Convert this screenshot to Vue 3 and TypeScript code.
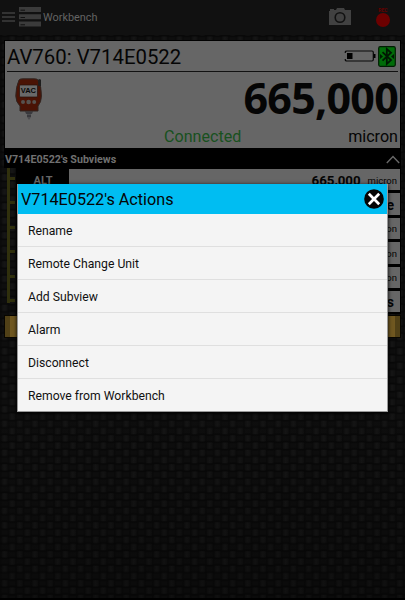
<script setup lang="ts">
interface Subview {
  label: string
  value: string
  unit: string
}

const device = { name: 'AV760: V714E0522', serial: 'V714E0522', reading: '665,000', unit: 'micron', status: 'Connected' }

const subviews: Subview[] = [
  { label: 'ALT', value: '665,000', unit: 'micron' },
  { label: '', value: 'e', unit: '' },
  { label: '', value: '', unit: 'micron' },
  { label: '', value: '', unit: 'micron' },
  { label: '', value: '', unit: 'micron' },
  { label: '', value: 's', unit: '' },
]

const actions: string[] = ['Rename', 'Remote Change Unit', 'Add Subview', 'Alarm', 'Disconnect', 'Remove from Workbench']
</script>

<template>
  <div class="screen">
    <svg class="weave" width="405" height="600" aria-hidden="true">
      <defs>
        <linearGradient id="strand" x1="0" y1="0" x2="1" y2="0">
          <stop offset="0" stop-color="#0f0f0f" />
          <stop offset="0.5" stop-color="#161616" />
          <stop offset="1" stop-color="#0f0f0f" />
        </linearGradient>
        <pattern id="cloth" x="8.5" y="7" width="15.2" height="14.5" patternUnits="userSpaceOnUse">
          <rect width="15.2" height="14.5" fill="#090909" />
          <rect x="0.5" y="0.5" width="6.4" height="6.2" rx="1" fill="url(#strand)" />
          <rect x="8.1" y="7.7" width="6.4" height="6.2" rx="1" fill="url(#strand)" />
          <rect x="8" y="1.3" width="6.6" height="4.6" fill="#0e0e0e" />
          <rect x="0.4" y="8.5" width="6.6" height="4.6" fill="#0e0e0e" />
        </pattern>
        <linearGradient id="fade" x1="0" y1="0" x2="0" y2="1">
          <stop offset="0.65" stop-color="#000" stop-opacity="0" />
          <stop offset="1" stop-color="#000" stop-opacity="0.25" />
        </linearGradient>
      </defs>
      <rect width="405" height="600" fill="url(#cloth)" />
      <rect width="405" height="600" fill="url(#fade)" />
      <rect y="598" width="405" height="2" fill="#000" />
    </svg>

    <header class="bar">
      <svg class="menu" width="13" height="10" viewBox="0 0 13 10">
        <path d="M0 1h13M0 5h13M0 9h13" stroke="#555" stroke-width="1.2" />
      </svg>
      <svg class="rack" width="22" height="20" viewBox="0 0 22 20">
        <path d="M0 0h22v5H0zM0 7.3h22v5H0zM0 14.6h22v5H0z" fill="#3b3b3b" />
        <path d="M1.5 3.2h4.5M1.5 10.5h4.5M1.5 17.8h4.5" stroke="#111" />
      </svg>
      <span class="bar-title">Workbench</span>
      <svg class="camera" width="22" height="18" viewBox="0 0 22 18">
        <path d="M0 3h1V1h4v1h2l1-2h7l1 2h6v15H0z" fill="#414141" />
        <circle cx="11" cy="9.5" r="4.8" fill="none" stroke="#111" stroke-width="1.6" />
      </svg>
      <div class="rec">
        <span>REC</span>
        <i></i>
      </div>
    </header>

    <main class="bench">
      <section class="card">
        <div class="card-head">
          <h1>{{ device.name }}</h1>
          <svg width="32" height="12" viewBox="0 0 32 12">
            <path d="M1.3 3V2Q1.3 1 3 1H28Q29.3 1 29.3 2.5V9.5Q29.3 11 28 11H3Q1.3 11 1.3 10V9" fill="none" stroke="#080808" stroke-width="1.2" />
            <path d="M3 3h5.5v6H3zM29.5 4h2v4h-2z" fill="#000" />
          </svg>
          <svg width="18" height="21" viewBox="0 0 18 21">
            <rect x="0.7" y="0.7" width="16.6" height="19.6" rx="1.5" fill="#006c08" stroke="#001c02" stroke-width="1.2" />
            <path d="M4.5 6.2L13 14.1L8.8 18V3L13 6.7L4.5 14.7" fill="none" stroke="#001702" stroke-width="1.8" />
            <path d="M2 8l3 2.5L2 13zM16 8l-3 2.5 3 2.5z" fill="#001702" />
          </svg>
        </div>
        <div class="card-main">
          <svg width="28" height="43" viewBox="0 0 28 43">
            <path d="M10 32h8v3l-2 1v3l-2 3-2-3v-3l-2-1z" fill="#4d4d50" />
            <path d="M11 35h6M12 38h4" stroke="#29292c" />
            <path d="M22 3l3-2v7l1 2-2 3z" fill="#222" />
            <path d="M4 2Q5 .8 8 .8H19Q22 .8 23 2Q26.7 9 26.4 18Q26.4 24 23 28V33H5V28Q.8 24 .8 18Q.8 9 4 2z" fill="#4a1305" stroke="#2f2420" />
            <path d="M23.2 1.5h2.8v6.5h-2.8z" fill="#1e1e1e" />
            <rect x="4.5" y="7" width="18" height="12" rx="1" fill="#696969" stroke="#25120d" stroke-width="0.7" />
            <text x="13.4" y="14.7" text-anchor="middle" font-family="Liberation Sans, sans-serif" font-size="7.5" font-weight="700" fill="#080808">VAC</text>
            <circle cx="8" cy="24" r="2" fill="#56524f" />
            <circle cx="13.6" cy="24" r="2.3" fill="#56524f" />
            <circle cx="19.2" cy="24" r="2" fill="#56524f" />
          </svg>
          <strong>{{ device.reading }}</strong>
        </div>
        <div class="card-foot">
          <span class="status">{{ device.status }}</span>
          <span class="unit">{{ device.unit }}</span>
        </div>
      </section>

      <div class="subhead">
        <span>{{ device.serial }}'s Subviews</span>
        <svg width="14" height="9" viewBox="0 0 14 9">
          <path d="M.8 8L7 1.6L13.2 8" fill="none" stroke="#686868" stroke-width="1.4" />
        </svg>
      </div>

      <div class="subviews">
        <div v-for="(row, i) in subviews" :key="i" class="branch">
          <span class="twig"></span>
          <div class="row">
            <b v-if="row.label" class="label">{{ row.label }}</b>
            <b class="value" :class="{ alone: !row.unit }">{{ row.value }}</b>
            <span v-if="row.unit" class="row-unit">{{ row.unit }}</span>
          </div>
        </div>
      </div>
      <div class="add-bar"></div>
    </main>

    <div class="dialog" role="dialog">
      <div class="dialog-head">
        <h2>{{ device.serial }}'s Actions</h2>
        <svg width="20" height="20" viewBox="0 0 20 20">
          <circle cx="10" cy="10" r="9.8" fill="#050505" />
          <path d="M4.8 4.8L15.2 15.2M15.2 4.8L4.8 15.2" stroke="#fff" stroke-width="2.7" />
        </svg>
      </div>
      <ul>
        <li v-for="action in actions" :key="action">{{ action }}</li>
      </ul>
    </div>
  </div>
</template>

<style>
body {
  margin: 0;
  background: #000;
}
</style>

<style scoped>
* {
  box-sizing: border-box;
}
.screen {
  position: relative;
  width: 405px;
  height: 600px;
  overflow: hidden;
  font-family: Roboto, sans-serif;
  color: #050505;
  background: #0b0b0b;
}
.weave {
  position: absolute;
  inset: 0;
}
.bar {
  position: relative;
  display: flex;
  align-items: flex-start;
  height: 35px;
  padding-left: 2px;
  background: #111;
}
.menu {
  margin-top: 12px;
}
.rack {
  margin: 7px 0 0 4px;
}
.bar-title {
  margin-left: 2px;
  font-size: 10.9px;
  line-height: 35px;
  color: #636363;
}
.camera {
  margin: 8px 0 0 auto;
}
.rec {
  display: flex;
  flex-direction: column;
  align-items: center;
  width: 14px;
  margin: 8px 15px 0 25px;
}
.rec span {
  height: 5px;
  font-size: 5px;
  line-height: 5px;
  font-weight: 700;
  color: #600;
}
.rec i {
  width: 14px;
  height: 14px;
  border-radius: 50%;
  background: #6c0000;
}
.bench {
  position: relative;
  padding: 5px 4px 0;
}
.card {
  height: 109px;
  border: 1px solid #000;
  background: #666;
}
.card-head {
  display: flex;
  align-items: center;
  height: 31px;
  margin: 0 2px;
  padding-right: 2px;
  border-bottom: 1px solid #111;
}
.card-head h1 {
  flex: 1;
  margin: 0;
  padding-top: 1px;
  font-size: 20.35px;
  font-weight: 400;
  line-height: 30px;
}
.card-head svg + svg {
  margin-left: 2px;
}
.card-main {
  display: flex;
  justify-content: space-between;
  height: 53px;
  padding: 6px 2px 0 10px;
}
.card-main strong {
  font-family: "Open Sans", sans-serif;
  font-size: 43px;
  line-height: 40px;
  letter-spacing: -0.75px;
}
.card-foot {
  display: flex;
  justify-content: space-between;
  padding: 1px 2px 0 159px;
  font-size: 16.1px;
  line-height: 22px;
}
.status {
  color: #18511e;
}
.subhead {
  display: flex;
  align-items: center;
  justify-content: space-between;
  height: 19px;
  padding: 1px 1px 0;
  font-size: 10.7px;
  font-weight: 700;
  color: #707070;
  background: #000;
}
.subviews {
  display: grid;
  grid-auto-rows: 24.4px;
  margin-left: 3px;
  border-left: 3px solid #30300d;
  height: 135px;
}
.branch {
  display: flex;
}
.twig {
  width: 5px;
  height: 3px;
  margin: 9px 1px 0 0;
  background: #30300d;
}
.row {
  display: flex;
  flex: 1;
  align-items: center;
  border: solid #000;
  border-width: 1px 1px 2px;
  background: #666;
}
.label {
  align-self: stretch;
  width: 52px;
  font-size: 11px;
  line-height: 23px;
  text-align: center;
  color: #666;
  background: #000;
}
.value {
  flex: 1;
  padding-top: 1px;
  font-size: 13.3px;
  text-align: right;
}
.value.alone {
  padding-right: 6px;
  font-size: 14px;
}
.row-unit {
  margin-left: 7px;
  padding: 1px 3px 0 0;
  font-size: 9.5px;
}
.add-bar {
  height: 23px;
  margin-top: 12px;
  border: 1px solid #080600;
  background: linear-gradient(90deg, #504017 5px, #705821 5px, #705821 calc(100% - 5px), #504017 calc(100% - 5px));
}
.dialog {
  position: absolute;
  top: 184px;
  left: 17px;
  width: 371px;
  height: 228px;
  border: solid #999;
  border-width: 0 1px 1px;
  background: #f4f4f4;
  box-shadow: 0 1px 4px #000;
}
.dialog-head {
  display: flex;
  align-items: center;
  justify-content: space-between;
  height: 30px;
  padding: 0 3px;
  background: #00bdf2;
}
.dialog-head h2 {
  margin: 0;
  font-size: 16.2px;
  font-weight: 400;
}
.dialog ul {
  margin: 0;
  padding: 0;
  list-style: none;
}
.dialog li {
  height: 33.1px;
  padding-left: 10px;
  border-bottom: 1px solid #dfdfdf;
  font-size: 12.2px;
  line-height: 34px;
  color: #111;
}
.dialog li:last-child {
  border: 0;
}
</style>
